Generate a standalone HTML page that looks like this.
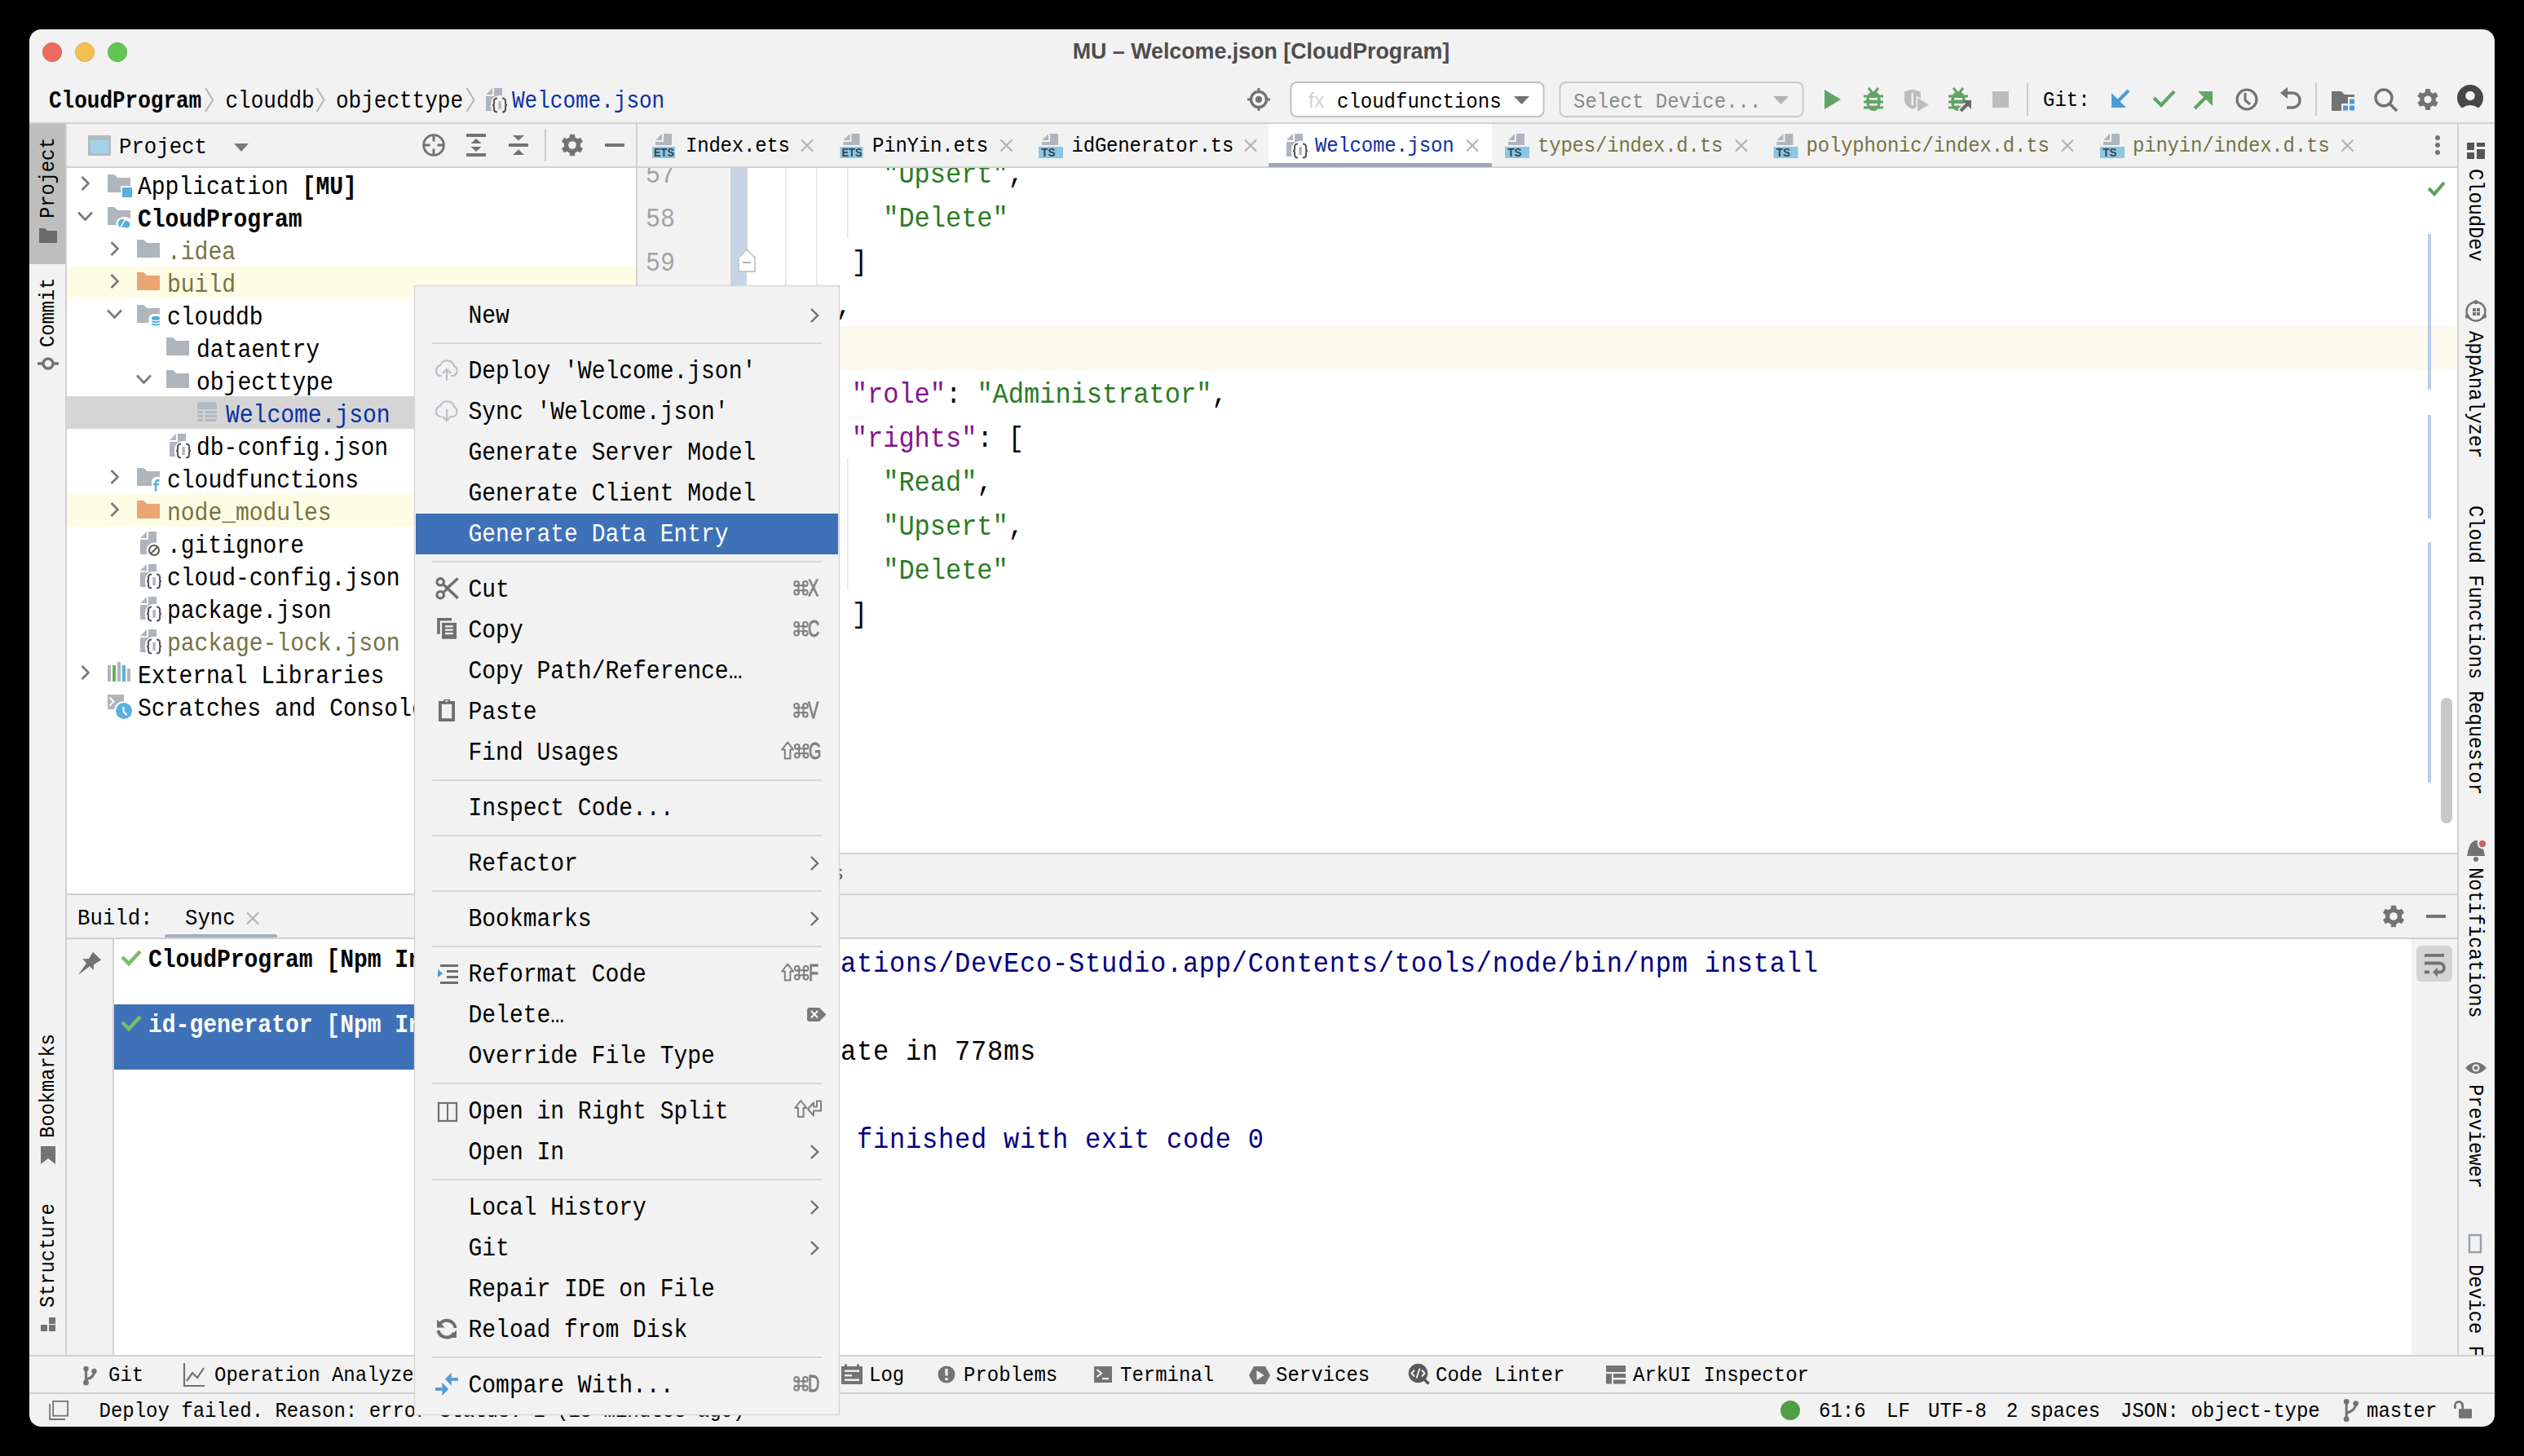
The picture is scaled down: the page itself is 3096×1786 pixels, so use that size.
<!DOCTYPE html>
<html><head><meta charset="utf-8"><title>MU - Welcome.json [CloudProgram]</title>
<style>html,body{margin:0;padding:0;background:#000;width:3096px;height:1786px;overflow:hidden}
</style></head>
<body><svg width="3096" height="1786" viewBox="0 0 3096 1786" xml:space="preserve" style="display:block"><rect x="0" y="0" width="3096" height="1786" fill="#000" />
<defs><clipPath id="win"><rect x="36" y="36" width="3024" height="1714" rx="14.5"/></clipPath><clipPath id="tree"><rect x="82" y="206" width="698" height="890"/></clipPath><clipPath id="ed"><rect x="782" y="206" width="2232" height="840"/></clipPath><clipPath id="rstrip"><rect x="3016" y="152" width="44" height="1510"/></clipPath><clipPath id="btree"><rect x="140" y="1152" width="700" height="510"/></clipPath></defs>
<g clip-path="url(#win)">
<rect x="36" y="36" width="3024" height="1714" fill="#f2f2f2" />
<circle cx="64" cy="64" r="11.6" fill="#ee6a5e" stroke="#d35b50" stroke-width="0.8"/>
<circle cx="104" cy="64" r="11.6" fill="#f5bf4f" stroke="#d9a343" stroke-width="0.8"/>
<circle cx="144" cy="64" r="11.6" fill="#61c554" stroke="#51a743" stroke-width="0.8"/>
<text x="1547" y="72.3" font-size="26.8" fill="#4d4d4d" font-family="'Liberation Sans', sans-serif" font-weight="bold" text-anchor="middle" >MU – Welcome.json [CloudProgram]</text>
<text transform="translate(60,132.4) scale(1,1.1)" font-size="26" fill="#000" font-family="'Liberation Mono', monospace" font-weight="bold" >CloudProgram</text>
<path d="M252 108 L261 122.5 L252 137" fill="none" stroke="#b5b5b5" stroke-width="2" />
<path d="M388.5 108 L397.5 122.5 L388.5 137" fill="none" stroke="#b5b5b5" stroke-width="2" />
<path d="M572.5 108 L581.5 122.5 L572.5 137" fill="none" stroke="#b5b5b5" stroke-width="2" />
<text transform="translate(276.5,132.4) scale(1,1.1)" font-size="26" fill="#000" font-family="'Liberation Mono', monospace" >clouddb</text>
<text transform="translate(412,132.4) scale(1,1.1)" font-size="26" fill="#000" font-family="'Liberation Mono', monospace" >objecttype</text>
<path d="M596 116 L604 108 V116 Z" fill="#afb5bd" />
<path d="M606 108 H616 V136 H596 V118 H606 Z" fill="#afb5bd" />
<rect x="602" y="117" width="24" height="24" rx="10" fill="#f2f2f2"/>
<rect x="611.4" y="124" width="3.4" height="10" fill="#afb5bd" />
<path d="M610 120.5 Q606 120.5 606 124 V127 Q606 129 604 129 Q606 129 606 131 V134 Q606 137.5 610 137.5 M616 120.5 Q620 120.5 620 124 V127 Q620 129 622 129 Q620 129 620 131 V134 Q620 137.5 616 137.5" fill="none" stroke="#555555" stroke-width="2.1" />
<text transform="translate(628,132.4) scale(1,1.1)" font-size="26" fill="#0a31a6" font-family="'Liberation Mono', monospace" >Welcome.json</text>
<g stroke="#737373" stroke-width="3.4" fill="none"><circle cx="1544" cy="122" r="9.5"/></g>
<circle cx="1544" cy="122" r="4.2" fill="#737373"/>
<path d="M1544 108 V112 M1544 132 V136 M1530 122 H1534 M1554 122 H1558" fill="none" stroke="#737373" stroke-width="3" />
<rect x="1583.5" y="101" width="310" height="42" fill="#ffffff" rx="7" stroke="#c2c2c2" stroke-width="2"/>
<text x="1605" y="131.5" font-size="25" fill="#d4d4d4" font-family="'Liberation Sans', sans-serif" >fx</text>
<text transform="translate(1640,132) scale(1,1.1)" font-size="24" fill="#000" font-family="'Liberation Mono', monospace" >cloudfunctions</text>
<path d="M1857 118 H1876 L1866.5 128 Z" fill="#737373" />
<rect x="1913.5" y="101" width="298" height="42" fill="none" rx="7" stroke="#c9c9c9" stroke-width="2"/>
<text transform="translate(1930,132) scale(1,1.1)" font-size="24" fill="#8a8a8a" font-family="'Liberation Mono', monospace" >Select Device...</text>
<path d="M2175 118 H2194 L2184.5 128 Z" fill="#b3b3b3" />
<path d="M2238 110 L2258 122 L2238 134 Z" fill="#62a465" />
<path d="M2286 118 H2310 M2286 125 H2310 M2286 132 H2310" fill="none" stroke="#62a465" stroke-width="3.2" />
<path d="M2292 108 L2296 113 M2304 108 L2300 113" fill="none" stroke="#62a465" stroke-width="3" />
<ellipse cx="2298" cy="124" rx="9" ry="12" fill="#62a465"/>
<rect x="2293" y="120" width="10" height="2.6" fill="#f2f2f2" />
<rect x="2293" y="127" width="10" height="2.6" fill="#f2f2f2" />
<path d="M2336 112.5 L2346 109.5 L2356 112.5 V122 Q2356 130 2346 134 Q2336 130 2336 122 Z" fill="#bcbcbc" />
<rect x="2344.5" y="114" width="2.5" height="15" fill="#f2f2f2" />
<path d="M2352 120 L2366 128.5 L2352 137 Z" fill="#bcbcbc" stroke="#f2f2f2" stroke-width="3" />
<path d="M2352 120 L2366 128.5 L2352 137 Z" fill="#bcbcbc" />
<path d="M2390 118 H2414 M2390 125 H2414 M2390 132 H2414" fill="none" stroke="#62a465" stroke-width="3.2" />
<path d="M2396 108 L2400 113 M2408 108 L2404 113" fill="none" stroke="#62a465" stroke-width="3" />
<ellipse cx="2402" cy="124" rx="9" ry="12" fill="#62a465"/>
<rect x="2397" y="120" width="10" height="2.6" fill="#f2f2f2" />
<rect x="2397" y="127" width="10" height="2.6" fill="#f2f2f2" />
<path d="M2404 137 L2417 124" fill="none" stroke="#f2f2f2" stroke-width="8" />
<path d="M2405 136 L2413 128" fill="none" stroke="#6a6a6a" stroke-width="4" />
<path d="M2407 123 H2418 V134 Z" fill="#6a6a6a" />
<rect x="2444" y="112" width="20" height="20" fill="#bdbdbd" />
<rect x="2486" y="102" width="2" height="40" fill="#cbcbcb" />
<text transform="translate(2506,130) scale(1,1.1)" font-size="24" fill="#000" font-family="'Liberation Mono', monospace" >Git:</text>
<path d="M2611 111 L2595 127" fill="none" stroke="#4d9ad8" stroke-width="4" />
<path d="M2590 114 V132 H2608 Z" fill="#4d9ad8" />
<path d="M2642 120 L2651 129 L2667 112" fill="none" stroke="#62a465" stroke-width="4.2" />
<path d="M2692 133 L2708 117" fill="none" stroke="#62a465" stroke-width="4" />
<path d="M2714 112 V130 L2696 112 Z" fill="#62a465" />
<circle cx="2756" cy="122" r="12" fill="none" stroke="#737373" stroke-width="3.2"/>
<path d="M2754 114 V123 L2760 128" fill="none" stroke="#737373" stroke-width="3" />
<path d="M2806 114 H2812 A9 9 0 0 1 2812 132 H2805" fill="none" stroke="#737373" stroke-width="3.4" />
<path d="M2797 114 L2806 107 V121 Z" fill="#737373" />
<rect x="2840" y="102" width="2" height="40" fill="#cbcbcb" />
<path d="M2860 112 H2872 L2876 116 H2888 V119 H2880 V127 H2872 V136 H2860 Z" fill="#737373" />
<rect x="2882" y="121.5" width="6" height="6" fill="#4d9ad8" />
<rect x="2874" y="129.5" width="6" height="6" fill="#4d9ad8" />
<rect x="2882" y="129.5" width="6" height="6" fill="#4d9ad8" />
<circle cx="2924" cy="120" r="10" fill="none" stroke="#737373" stroke-width="3.4"/>
<path d="M2931 127 L2940 136" fill="none" stroke="#737373" stroke-width="3.6" />
<path d="M2975.27 113.16 L2975.64 109.72 L2980.36 109.72 L2980.73 113.16 L2984.29 115.21 L2987.45 113.82 L2989.81 117.91 L2987.02 119.95 L2987.02 124.05 L2989.81 126.09 L2987.45 130.18 L2984.29 128.79 L2980.73 130.84 L2980.36 134.28 L2975.64 134.28 L2975.27 130.84 L2971.71 128.79 L2968.55 130.18 L2966.19 126.09 L2968.98 124.05 L2968.98 119.95 L2966.19 117.91 L2968.55 113.82 L2971.71 115.21 Z" fill="#737373" stroke="#737373" stroke-width="1.2" stroke-linejoin="round"/>
<circle cx="2978" cy="122" r="4.62" fill="#f2f2f2"/>
<circle cx="3030" cy="120" r="16" fill="#474747"/>
<circle cx="3030" cy="117.5" r="5.8" fill="#f2f2f2"/>
<ellipse cx="3030" cy="139" rx="13" ry="10" fill="#f2f2f2"/>
<rect x="36" y="150" width="3024" height="2" fill="#d1d1d1" />
<rect x="36" y="152" width="44" height="172" fill="#bebebe" />
<rect x="80" y="152" width="2" height="1510" fill="#d1d1d1" />
<text transform="translate(66,268) rotate(-90) scale(1,1.1)" font-size="24" fill="#000" font-family="'Liberation Mono', monospace" letter-spacing="-0.2">Project</text>
<path d="M48 280 H55 L58 283 H70 V298 H48 Z" fill="#6b6b6b" />
<text transform="translate(66,426) rotate(-90) scale(1,1.1)" font-size="24" fill="#000" font-family="'Liberation Mono', monospace" letter-spacing="-0.2">Commit</text>
<circle cx="59" cy="446" r="6" fill="none" stroke="#737373" stroke-width="3.4"/>
<path d="M46 446 H53 M65 446 H72" fill="none" stroke="#737373" stroke-width="3.4" />
<text transform="translate(66,1396) rotate(-90) scale(1,1.1)" font-size="24" fill="#000" font-family="'Liberation Mono', monospace" letter-spacing="-0.2">Bookmarks</text>
<path d="M50 1406 H68 V1428 L59 1421 L50 1428 Z" fill="#737373" />
<text transform="translate(66,1604) rotate(-90) scale(1,1.1)" font-size="24" fill="#000" font-family="'Liberation Mono', monospace" letter-spacing="-0.2">Structure</text>
<rect x="50" y="1625" width="8" height="8" fill="#737373" />
<rect x="60" y="1625" width="8" height="8" fill="#737373" />
<rect x="60" y="1616" width="8" height="8" fill="#737373" />
<rect x="108" y="166" width="28" height="25" fill="#b3bac2" />
<rect x="111" y="172" width="22" height="16" fill="#a3d3ea" />
<text transform="translate(146,187.5) scale(1,1.1)" font-size="25.7" fill="#000" font-family="'Liberation Mono', monospace" >Project</text>
<path d="M287 176 H305 L296 186 Z" fill="#7a7a7a" />
<circle cx="532" cy="178" r="12.4" fill="none" stroke="#737373" stroke-width="2.9"/>
<path d="M532 166 V173.5 M532 182.5 V190 M520 178 H527.5 M536.5 178 H544" fill="none" stroke="#737373" stroke-width="3" />
<rect x="572" y="164" width="24" height="4" fill="#737373" />
<rect x="572" y="188" width="24" height="4" fill="#737373" />
<path d="M577.5 176 L584 170 L590.5 176 Z M577.5 180 L584 186 L590.5 180 Z" fill="#737373" />
<rect x="624" y="176" width="24" height="4" fill="#737373" />
<path d="M629 166 H643 L636 172.6 Z M629 190 H643 L636 183.2 Z" fill="#737373" />
<rect x="668" y="158" width="2" height="40" fill="#cbcbcb" />
<path d="M699.16 168.81 L699.54 165.23 L704.46 165.23 L704.84 168.81 L708.54 170.94 L711.83 169.49 L714.28 173.74 L711.38 175.87 L711.38 180.13 L714.28 182.26 L711.83 186.51 L708.54 185.06 L704.84 187.19 L704.46 190.77 L699.54 190.77 L699.16 187.19 L695.46 185.06 L692.17 186.51 L689.72 182.26 L692.62 180.13 L692.62 175.87 L689.72 173.74 L692.17 169.49 L695.46 170.94 Z" fill="#737373" stroke="#737373" stroke-width="1.2" stroke-linejoin="round"/>
<circle cx="702" cy="178" r="4.81" fill="#f2f2f2"/>
<rect x="742" y="176" width="24" height="4" fill="#737373" />
<rect x="82" y="204" width="2932" height="2" fill="#d1d1d1" />
<rect x="780" y="152" width="2" height="944" fill="#d1d1d1" />
<rect x="82" y="206" width="698" height="890" fill="#ffffff" />
<g clip-path="url(#tree)">
<path d="M100.5 217 L108.5 225 L100.5 233" fill="none" stroke="#7a7a7a" stroke-width="2.6" stroke-linecap="butt"/>
<path d="M132 214 H140 L144.5 218 H160 V236 H132 Z" fill="#afb5bd" />
<rect x="148" y="228" width="14" height="14" fill="#ffffff" />
<rect x="150" y="230" width="12" height="12" fill="#5aafdd" />
<text transform="translate(169,237.5) scale(1,1.1)" font-size="28" fill="#000" font-family="'Liberation Mono', monospace" >Application </text>
<text transform="translate(370.6,237.5) scale(1,1.1)" font-size="28" fill="#000" font-family="'Liberation Mono', monospace" font-weight="bold" >[MU]</text>
<path d="M96.0 260.5 L104.5 269.5 L113.0 260.5" fill="none" stroke="#7a7a7a" stroke-width="2.6" />
<path d="M132 254 H140 L144.5 258 H160 V276 H132 Z" fill="#afb5bd" />
<ellipse cx="152.5" cy="274" rx="10" ry="8" fill="#ffffff"/>
<circle cx="150" cy="273.8" r="5" fill="#5aafdd"/>
<circle cx="155.3" cy="275.3" r="4.2" fill="#5aafdd"/>
<rect x="145.5" y="274" width="13" height="4.6" fill="#5aafdd" rx="2.2" />
<path d="M147.5 279.5 L153.5 269" fill="none" stroke="#ffffff" stroke-width="1.5" />
<text transform="translate(169,277.5) scale(1,1.1)" font-size="28" fill="#000" font-family="'Liberation Mono', monospace" font-weight="bold" >CloudProgram</text>
<path d="M136.5 297 L144.5 305 L136.5 313" fill="none" stroke="#7a7a7a" stroke-width="2.6" stroke-linecap="butt"/>
<path d="M168 294 H176 L180.5 298 H196 V316 H168 Z" fill="#afb5bd" />
<text transform="translate(205,317.5) scale(1,1.1)" font-size="28" fill="#767444" font-family="'Liberation Mono', monospace" >.idea</text>
<rect x="82" y="326" width="698" height="40" fill="#fdfde6" />
<path d="M136.5 337 L144.5 345 L136.5 353" fill="none" stroke="#7a7a7a" stroke-width="2.6" stroke-linecap="butt"/>
<path d="M168 334 H176 L180.5 338 H196 V356 H168 Z" fill="#eba573" />
<text transform="translate(205,357.5) scale(1,1.1)" font-size="28" fill="#767444" font-family="'Liberation Mono', monospace" >build</text>
<path d="M132.0 380.5 L140.5 389.5 L149.0 380.5" fill="none" stroke="#7a7a7a" stroke-width="2.6" />
<path d="M168 374 H176 L180.5 378 H196 V396 H168 Z" fill="#afb5bd" />
<rect x="182.5" y="385" width="17" height="19" rx="6" fill="#ffffff"/>
<path d="M186 389.8 V398 A5 2.2 0 0 0 196 398 V389.8 Z" fill="#4eaede" />
<ellipse cx="191" cy="389.8" rx="5" ry="2" fill="#4eaede"/>
<path d="M186 391.6 A5 2 0 0 0 196 391.6" fill="none" stroke="#ffffff" stroke-width="1.2" />
<path d="M186 394.8 A5 2 0 0 0 196 394.8" fill="none" stroke="#ffffff" stroke-width="1.2" />
<path d="M186 398.0 A5 2 0 0 0 196 398.0" fill="none" stroke="#ffffff" stroke-width="1.2" />
<text transform="translate(205,397.5) scale(1,1.1)" font-size="28" fill="#000" font-family="'Liberation Mono', monospace" >clouddb</text>
<path d="M204 414 H212 L216.5 418 H232 V436 H204 Z" fill="#afb5bd" />
<text transform="translate(241,437.5) scale(1,1.1)" font-size="28" fill="#000" font-family="'Liberation Mono', monospace" >dataentry</text>
<path d="M168.0 460.5 L176.5 469.5 L185.0 460.5" fill="none" stroke="#7a7a7a" stroke-width="2.6" />
<path d="M204 454 H212 L216.5 458 H232 V476 H204 Z" fill="#afb5bd" />
<text transform="translate(241,477.5) scale(1,1.1)" font-size="28" fill="#000" font-family="'Liberation Mono', monospace" >objecttype</text>
<rect x="82" y="486" width="698" height="40" fill="#d5d5d5" />
<rect x="242" y="493" width="24" height="24" fill="#b1b9c1" rx="4" />
<rect x="242" y="502" width="24" height="1.8" fill="#d5d5d5" />
<rect x="242" y="507" width="24" height="1.8" fill="#d5d5d5" />
<rect x="242" y="512" width="24" height="1.8" fill="#d5d5d5" />
<rect x="249" y="502" width="2.2" height="17" fill="#d5d5d5" />
<text transform="translate(277,517.5) scale(1,1.1)" font-size="28" fill="#0a31a6" font-family="'Liberation Mono', monospace" >Welcome.json</text>
<path d="M208 540 L216 532 V540 Z" fill="#afb5bd" />
<path d="M218 532 H228 V560 H208 V542 H218 Z" fill="#afb5bd" />
<rect x="214" y="541" width="24" height="24" rx="10" fill="#ffffff"/>
<rect x="223.4" y="548" width="3.4" height="10" fill="#afb5bd" />
<path d="M222 544.5 Q218 544.5 218 548 V551 Q218 553 216 553 Q218 553 218 555 V558 Q218 561.5 222 561.5 M228 544.5 Q232 544.5 232 548 V551 Q232 553 234 553 Q232 553 232 555 V558 Q232 561.5 228 561.5" fill="none" stroke="#555555" stroke-width="2.1" />
<text transform="translate(241,557.5) scale(1,1.1)" font-size="28" fill="#000" font-family="'Liberation Mono', monospace" >db-config.json</text>
<path d="M136.5 577 L144.5 585 L136.5 593" fill="none" stroke="#7a7a7a" stroke-width="2.6" stroke-linecap="butt"/>
<path d="M168 574 H176 L180.5 578 H196 V596 H168 Z" fill="#afb5bd" />
<rect x="186" y="585" width="14" height="20" rx="6" fill="#ffffff"/>
<path d="M195.5 589.5 Q191 588 191 593 V602.5 M188 594 H195" fill="none" stroke="#5aafdd" stroke-width="2.6" />
<text transform="translate(205,597.5) scale(1,1.1)" font-size="28" fill="#000" font-family="'Liberation Mono', monospace" >cloudfunctions</text>
<rect x="82" y="606" width="698" height="40" fill="#fdfde6" />
<path d="M136.5 617 L144.5 625 L136.5 633" fill="none" stroke="#7a7a7a" stroke-width="2.6" stroke-linecap="butt"/>
<path d="M168 614 H176 L180.5 618 H196 V636 H168 Z" fill="#eba573" />
<text transform="translate(205,637.5) scale(1,1.1)" font-size="28" fill="#767444" font-family="'Liberation Mono', monospace" >node_modules</text>
<path d="M172 660 L180 652 V660 Z" fill="#afb5bd" />
<path d="M182 652 H192 V680 H172 V662 H182 Z" fill="#afb5bd" />
<circle cx="189" cy="675" r="9.5" fill="#ffffff"/>
<circle cx="189" cy="675" r="6" fill="none" stroke="#5e5e5e" stroke-width="2.2"/>
<path d="M184.5 679.5 L193.5 670.5" fill="none" stroke="#5e5e5e" stroke-width="2.2" />
<text transform="translate(205,677.5) scale(1,1.1)" font-size="28" fill="#000" font-family="'Liberation Mono', monospace" >.gitignore</text>
<path d="M172 700 L180 692 V700 Z" fill="#afb5bd" />
<path d="M182 692 H192 V720 H172 V702 H182 Z" fill="#afb5bd" />
<rect x="178" y="701" width="24" height="24" rx="10" fill="#ffffff"/>
<rect x="187.4" y="708" width="3.4" height="10" fill="#afb5bd" />
<path d="M186 704.5 Q182 704.5 182 708 V711 Q182 713 180 713 Q182 713 182 715 V718 Q182 721.5 186 721.5 M192 704.5 Q196 704.5 196 708 V711 Q196 713 198 713 Q196 713 196 715 V718 Q196 721.5 192 721.5" fill="none" stroke="#555555" stroke-width="2.1" />
<text transform="translate(205,717.5) scale(1,1.1)" font-size="28" fill="#000" font-family="'Liberation Mono', monospace" >cloud-config.json</text>
<path d="M172 740 L180 732 V740 Z" fill="#afb5bd" />
<path d="M182 732 H192 V760 H172 V742 H182 Z" fill="#afb5bd" />
<rect x="178" y="741" width="24" height="24" rx="10" fill="#ffffff"/>
<rect x="187.4" y="748" width="3.4" height="10" fill="#afb5bd" />
<path d="M186 744.5 Q182 744.5 182 748 V751 Q182 753 180 753 Q182 753 182 755 V758 Q182 761.5 186 761.5 M192 744.5 Q196 744.5 196 748 V751 Q196 753 198 753 Q196 753 196 755 V758 Q196 761.5 192 761.5" fill="none" stroke="#555555" stroke-width="2.1" />
<text transform="translate(205,757.5) scale(1,1.1)" font-size="28" fill="#000" font-family="'Liberation Mono', monospace" >package.json</text>
<path d="M172 780 L180 772 V780 Z" fill="#afb5bd" />
<path d="M182 772 H192 V800 H172 V782 H182 Z" fill="#afb5bd" />
<rect x="178" y="781" width="24" height="24" rx="10" fill="#ffffff"/>
<rect x="187.4" y="788" width="3.4" height="10" fill="#afb5bd" />
<path d="M186 784.5 Q182 784.5 182 788 V791 Q182 793 180 793 Q182 793 182 795 V798 Q182 801.5 186 801.5 M192 784.5 Q196 784.5 196 788 V791 Q196 793 198 793 Q196 793 196 795 V798 Q196 801.5 192 801.5" fill="none" stroke="#555555" stroke-width="2.1" />
<text transform="translate(205,797.5) scale(1,1.1)" font-size="28" fill="#767444" font-family="'Liberation Mono', monospace" >package-lock.json</text>
<path d="M100.5 817 L108.5 825 L100.5 833" fill="none" stroke="#7a7a7a" stroke-width="2.6" stroke-linecap="butt"/>
<rect x="132" y="816" width="4" height="20" fill="#afb5bd" />
<rect x="138" y="816" width="4" height="20" fill="#6db05a" />
<rect x="144" y="812" width="4" height="24" fill="#afb5bd" />
<rect x="150" y="816" width="4" height="20" fill="#5aafdd" />
<rect x="156" y="820" width="4" height="16" fill="#afb5bd" />
<text transform="translate(169,837.5) scale(1,1.1)" font-size="28" fill="#000" font-family="'Liberation Mono', monospace" >External Libraries</text>
<rect x="132" y="852" width="20" height="18" fill="#afb5bd" />
<path d="M134.5 855.5 L139.5 860.5 L134.5 865.5" fill="none" stroke="#ffffff" stroke-width="2" />
<circle cx="152" cy="872" r="12" fill="#ffffff"/>
<circle cx="152" cy="872" r="10" fill="#5aafdd"/>
<path d="M151.5 867 V873 L155.5 877" fill="none" stroke="#ffffff" stroke-width="2" />
<text transform="translate(169,877.5) scale(1,1.1)" font-size="28" fill="#000" font-family="'Liberation Mono', monospace" >Scratches and Consoles</text>
</g>
<rect x="1556" y="152" width="274" height="52" fill="#ffffff" />
<rect x="1556" y="200" width="274" height="5" fill="#a1a9b8" />
<path d="M804 172 L812 164 V172 Z" fill="#afb5bd" />
<path d="M814 164 H824 V178 H804 V174 H814 Z" fill="#afb5bd" />
<rect x="800" y="180" width="28" height="14" fill="#8bc7e5" />
<text transform="translate(814.5,192) scale(0.9,1)" font-size="14.2" font-weight="bold" fill="#36444e" font-family="'Liberation Sans', sans-serif" text-anchor="middle">ETS</text>
<text transform="translate(841,186) scale(1,1.1)" font-size="24" fill="#000" font-family="'Liberation Mono', monospace" letter-spacing="-0.2" >Index.ets</text>
<path d="M983 171.5 L997 185.5 M997 171.5 L983 185.5" fill="none" stroke="#b4b4b4" stroke-width="2.2" />
<path d="M1034.5 172 L1042.5 164 V172 Z" fill="#afb5bd" />
<path d="M1044.5 164 H1054.5 V178 H1034.5 V174 H1044.5 Z" fill="#afb5bd" />
<rect x="1030.5" y="180" width="28" height="14" fill="#8bc7e5" />
<text transform="translate(1045.0,192) scale(0.9,1)" font-size="14.2" font-weight="bold" fill="#36444e" font-family="'Liberation Sans', sans-serif" text-anchor="middle">ETS</text>
<text transform="translate(1070,186) scale(1,1.1)" font-size="24" fill="#000" font-family="'Liberation Mono', monospace" letter-spacing="-0.2" >PinYin.ets</text>
<path d="M1227.5 171.5 L1241.5 185.5 M1241.5 171.5 L1227.5 185.5" fill="none" stroke="#b4b4b4" stroke-width="2.2" />
<path d="M1278 172 L1286 164 V172 Z" fill="#afb5bd" />
<path d="M1288 164 H1298 V178 H1278 V174 H1288 Z" fill="#afb5bd" />
<rect x="1274" y="180" width="30" height="14" fill="#8bc7e5" />
<text transform="translate(1277.2,192) scale(0.95,1)" font-size="14.2" font-weight="bold" fill="#36444e" font-family="'Liberation Sans', sans-serif">TS</text>
<text transform="translate(1314.5,186) scale(1,1.1)" font-size="24" fill="#000" font-family="'Liberation Mono', monospace" letter-spacing="-0.2" >idGenerator.ts</text>
<path d="M1527 171.5 L1541 185.5 M1541 171.5 L1527 185.5" fill="none" stroke="#b4b4b4" stroke-width="2.2" />
<path d="M1578 172 L1586 164 V172 Z" fill="#afb5bd" />
<path d="M1588 164 H1598 V192 H1578 V174 H1588 Z" fill="#afb5bd" />
<rect x="1584" y="173" width="24" height="24" rx="10" fill="#ffffff"/>
<rect x="1593.4" y="180" width="3.4" height="10" fill="#afb5bd" />
<path d="M1592 176.5 Q1588 176.5 1588 180 V183 Q1588 185 1586 185 Q1588 185 1588 187 V190 Q1588 193.5 1592 193.5 M1598 176.5 Q1602 176.5 1602 180 V183 Q1602 185 1604 185 Q1602 185 1602 187 V190 Q1602 193.5 1598 193.5" fill="none" stroke="#555555" stroke-width="2.1" />
<text transform="translate(1613,186) scale(1,1.1)" font-size="24" fill="#0a31a6" font-family="'Liberation Mono', monospace" letter-spacing="-0.2" >Welcome.json</text>
<path d="M1799 171.5 L1813 185.5 M1813 171.5 L1799 185.5" fill="none" stroke="#b4b4b4" stroke-width="2.2" />
<path d="M1850 172 L1858 164 V172 Z" fill="#afb5bd" />
<path d="M1860 164 H1870 V178 H1850 V174 H1860 Z" fill="#afb5bd" />
<rect x="1846" y="180" width="30" height="14" fill="#8bc7e5" />
<text transform="translate(1849.2,192) scale(0.95,1)" font-size="14.2" font-weight="bold" fill="#36444e" font-family="'Liberation Sans', sans-serif">TS</text>
<text transform="translate(1886,186) scale(1,1.1)" font-size="24" fill="#767444" font-family="'Liberation Mono', monospace" letter-spacing="-0.2" >types/index.d.ts</text>
<path d="M2129 171.5 L2143 185.5 M2143 171.5 L2129 185.5" fill="none" stroke="#b4b4b4" stroke-width="2.2" />
<path d="M2179.5 172 L2187.5 164 V172 Z" fill="#afb5bd" />
<path d="M2189.5 164 H2199.5 V178 H2179.5 V174 H2189.5 Z" fill="#afb5bd" />
<rect x="2175.5" y="180" width="30" height="14" fill="#8bc7e5" />
<text transform="translate(2178.7,192) scale(0.95,1)" font-size="14.2" font-weight="bold" fill="#36444e" font-family="'Liberation Sans', sans-serif">TS</text>
<text transform="translate(2215.5,186) scale(1,1.1)" font-size="24" fill="#767444" font-family="'Liberation Mono', monospace" letter-spacing="-0.2" >polyphonic/index.d.ts</text>
<path d="M2529 171.5 L2543 185.5 M2543 171.5 L2529 185.5" fill="none" stroke="#b4b4b4" stroke-width="2.2" />
<path d="M2580 172 L2588 164 V172 Z" fill="#afb5bd" />
<path d="M2590 164 H2600 V178 H2580 V174 H2590 Z" fill="#afb5bd" />
<rect x="2576" y="180" width="30" height="14" fill="#8bc7e5" />
<text transform="translate(2579.2,192) scale(0.95,1)" font-size="14.2" font-weight="bold" fill="#36444e" font-family="'Liberation Sans', sans-serif">TS</text>
<text transform="translate(2616,186) scale(1,1.1)" font-size="24" fill="#767444" font-family="'Liberation Mono', monospace" letter-spacing="-0.2" >pinyin/index.d.ts</text>
<path d="M2872.5 171.5 L2886.5 185.5 M2886.5 171.5 L2872.5 185.5" fill="none" stroke="#b4b4b4" stroke-width="2.2" />
<circle cx="2990" cy="169" r="3" fill="#737373"/>
<circle cx="2990" cy="178" r="3" fill="#737373"/>
<circle cx="2990" cy="187" r="3" fill="#737373"/>
<rect x="916" y="206" width="2098" height="840" fill="#ffffff" />
<rect x="896" y="206" width="20" height="560" fill="#c7d4e8" />
<rect x="916" y="400" width="2098" height="54" fill="#fcfaed" />
<g clip-path="url(#ed)">
<rect x="963" y="206" width="1.6" height="840" fill="#e6e6e6" />
<rect x="1001" y="206" width="1.6" height="840" fill="#e6e6e6" />
<rect x="1039" y="206" width="1.6" height="86" fill="#e6e6e6" />
<rect x="1039" y="562" width="1.6" height="162" fill="#e6e6e6" />
<text transform="translate(828,224) scale(1,1.1)" font-size="30" fill="#a3a3a3" font-family="'Liberation Mono', monospace" text-anchor="end" >57</text>
<text transform="translate(828,278) scale(1,1.1)" font-size="30" fill="#a3a3a3" font-family="'Liberation Mono', monospace" text-anchor="end" >58</text>
<text transform="translate(828,332) scale(1,1.1)" font-size="30" fill="#a3a3a3" font-family="'Liberation Mono', monospace" text-anchor="end" >59</text>
<text transform="translate(828,386) scale(1,1.1)" font-size="30" fill="#a3a3a3" font-family="'Liberation Mono', monospace" text-anchor="end" >60</text>
<text transform="translate(828,440) scale(1,1.1)" font-size="30" fill="#a3a3a3" font-family="'Liberation Mono', monospace" text-anchor="end" >61</text>
<text transform="translate(828,494) scale(1,1.1)" font-size="30" fill="#a3a3a3" font-family="'Liberation Mono', monospace" text-anchor="end" >62</text>
<text transform="translate(828,548) scale(1,1.1)" font-size="30" fill="#a3a3a3" font-family="'Liberation Mono', monospace" text-anchor="end" >63</text>
<text transform="translate(828,602) scale(1,1.1)" font-size="30" fill="#a3a3a3" font-family="'Liberation Mono', monospace" text-anchor="end" >64</text>
<text transform="translate(828,656) scale(1,1.1)" font-size="30" fill="#a3a3a3" font-family="'Liberation Mono', monospace" text-anchor="end" >65</text>
<text transform="translate(828,710) scale(1,1.1)" font-size="30" fill="#a3a3a3" font-family="'Liberation Mono', monospace" text-anchor="end" >66</text>
<text transform="translate(828,764) scale(1,1.1)" font-size="30" fill="#a3a3a3" font-family="'Liberation Mono', monospace" text-anchor="end" >67</text>
<text transform="translate(828,818) scale(1,1.1)" font-size="30" fill="#a3a3a3" font-family="'Liberation Mono', monospace" text-anchor="end" >68</text>
<text transform="translate(828,872) scale(1,1.1)" font-size="30" fill="#a3a3a3" font-family="'Liberation Mono', monospace" text-anchor="end" >69</text>
<rect x="915" y="206" width="1.8" height="102" fill="#cfcfcf" />
<path d="M906 333 V316 L916 306 L926 316 V333 Z" fill="#ffffff" stroke="#c9c9c9" stroke-width="1.8" />
<rect x="911" y="321" width="10" height="2" fill="#b0b0b0" />
<text transform="translate(1083.2,224) scale(1,1.1)" font-size="32" fill="#2c7b25" font-family="'Liberation Mono', monospace" >"Upsert"</text>
<text transform="translate(1236.8,224) scale(1,1.1)" font-size="32" fill="#000" font-family="'Liberation Mono', monospace" >,</text>
<text transform="translate(1083.2,278) scale(1,1.1)" font-size="32" fill="#2c7b25" font-family="'Liberation Mono', monospace" >"Delete"</text>
<text transform="translate(1044.8,332) scale(1,1.1)" font-size="32" fill="#000" font-family="'Liberation Mono', monospace" >]</text>
<text transform="translate(1006.4,386) scale(1,1.1)" font-size="32" fill="#000" font-family="'Liberation Mono', monospace" >},</text>
<text transform="translate(1006.4,440) scale(1,1.1)" font-size="32" fill="#000" font-family="'Liberation Mono', monospace" >{</text>
<text transform="translate(1044.8,494) scale(1,1.1)" font-size="32" fill="#851490" font-family="'Liberation Mono', monospace" >"role"</text>
<text transform="translate(1160.0,494) scale(1,1.1)" font-size="32" fill="#000" font-family="'Liberation Mono', monospace" >: </text>
<text transform="translate(1198.4,494) scale(1,1.1)" font-size="32" fill="#2c7b25" font-family="'Liberation Mono', monospace" >"Administrator"</text>
<text transform="translate(1486.4,494) scale(1,1.1)" font-size="32" fill="#000" font-family="'Liberation Mono', monospace" >,</text>
<text transform="translate(1044.8,548) scale(1,1.1)" font-size="32" fill="#851490" font-family="'Liberation Mono', monospace" >"rights"</text>
<text transform="translate(1198.4,548) scale(1,1.1)" font-size="32" fill="#000" font-family="'Liberation Mono', monospace" >: [</text>
<text transform="translate(1083.2,602) scale(1,1.1)" font-size="32" fill="#2c7b25" font-family="'Liberation Mono', monospace" >"Read"</text>
<text transform="translate(1198.4,602) scale(1,1.1)" font-size="32" fill="#000" font-family="'Liberation Mono', monospace" >,</text>
<text transform="translate(1083.2,656) scale(1,1.1)" font-size="32" fill="#2c7b25" font-family="'Liberation Mono', monospace" >"Upsert"</text>
<text transform="translate(1236.8,656) scale(1,1.1)" font-size="32" fill="#000" font-family="'Liberation Mono', monospace" >,</text>
<text transform="translate(1083.2,710) scale(1,1.1)" font-size="32" fill="#2c7b25" font-family="'Liberation Mono', monospace" >"Delete"</text>
<text transform="translate(1044.8,764) scale(1,1.1)" font-size="32" fill="#000" font-family="'Liberation Mono', monospace" >]</text>
<text transform="translate(1006.4,818) scale(1,1.1)" font-size="32" fill="#000" font-family="'Liberation Mono', monospace" >}</text>
<text transform="translate(968.0,872) scale(1,1.1)" font-size="32" fill="#000" font-family="'Liberation Mono', monospace" >]</text>
</g>
<path d="M2979 231 L2986 238 L2998 224" fill="none" stroke="#5aa05e" stroke-width="4" />
<rect x="2978" y="287" width="4" height="191" fill="#b9cdef" />
<rect x="2978" y="509" width="4" height="127" fill="#b9cdef" />
<rect x="2978" y="665" width="4" height="295" fill="#b9cdef" />
<rect x="2994" y="856" width="14" height="154" fill="#c8c8c8" rx="7" />
<rect x="782" y="1046" width="2232" height="2" fill="#d1d1d1" />
<text transform="translate(1035,1079) scale(1,1.1)" font-size="24" fill="#555" font-family="'Liberation Mono', monospace" text-anchor="end" >objecttypes</text>
<rect x="82" y="1096" width="2932" height="2" fill="#d1d1d1" />
<text transform="translate(95,1134) scale(1,1.1)" font-size="25.7" fill="#000" font-family="'Liberation Mono', monospace" >Build:</text>
<text transform="translate(227,1134) scale(1,1.1)" font-size="25.7" fill="#000" font-family="'Liberation Mono', monospace" >Sync</text>
<path d="M303 1119.5 L317 1133.5 M317 1119.5 L303 1133.5" fill="none" stroke="#b4b4b4" stroke-width="2.2" />
<rect x="202" y="1146" width="138" height="5" fill="#a4acbc" rx="2.5" />
<path d="M2933.16 1114.81 L2933.54 1111.23 L2938.46 1111.23 L2938.84 1114.81 L2942.54 1116.94 L2945.83 1115.49 L2948.28 1119.74 L2945.38 1121.87 L2945.38 1126.13 L2948.28 1128.26 L2945.83 1132.51 L2942.54 1131.06 L2938.84 1133.19 L2938.46 1136.77 L2933.54 1136.77 L2933.16 1133.19 L2929.46 1131.06 L2926.17 1132.51 L2923.72 1128.26 L2926.62 1126.13 L2926.62 1121.87 L2923.72 1119.74 L2926.17 1115.49 L2929.46 1116.94 Z" fill="#737373" stroke="#737373" stroke-width="1.2" stroke-linejoin="round"/>
<circle cx="2936" cy="1124" r="4.81" fill="#f2f2f2"/>
<rect x="2976" y="1122" width="24" height="4" fill="#737373" />
<rect x="82" y="1150" width="2932" height="2" fill="#d1d1d1" />
<rect x="138" y="1152" width="2" height="510" fill="#d1d1d1" />
<rect x="140" y="1152" width="2818" height="510" fill="#ffffff" />
<path d="M114 1167.7 L124.1 1177.5 L115 1183.2 L114.7 1189.9 L110.1 1185.2 L95.8 1195.9 L106 1181.4 L101.1 1176.3 L109 1176 Z" fill="#737373" />
<rect x="140" y="1232" width="720" height="80" fill="#3e71b7" />
<g clip-path="url(#btree)">
<path d="M150 1174 L158 1182 L172 1167" fill="none" stroke="#7dbb6a" stroke-width="4.5" />
<text transform="translate(182,1186) scale(1,1.1)" font-size="28" fill="#000" font-family="'Liberation Mono', monospace" font-weight="bold" >CloudProgram [Npm Install]</text>
<path d="M150 1254 L158 1262 L172 1247" fill="none" stroke="#7dbb6a" stroke-width="4.5" />
<text transform="translate(182,1266) scale(1,1.1)" font-size="28" fill="#fff" font-family="'Liberation Mono', monospace" font-weight="bold" >id-generator [Npm Install]</text>
</g>
<text transform="translate(891,1192) scale(1,1.1)" font-size="32" fill="#000080" font-family="'Liberation Mono', monospace" letter-spacing="0.8" >/Applications/DevEco-Studio.app/Contents/tools/node/bin/npm install</text>
<text transform="translate(891,1300) scale(1,1.1)" font-size="32" fill="#000" font-family="'Liberation Mono', monospace" letter-spacing="0.8" >up to date in 778ms</text>
<text transform="translate(891,1408) scale(1,1.1)" font-size="32" fill="#000080" font-family="'Liberation Mono', monospace" letter-spacing="0.8" >Process finished with exit code 0</text>
<rect x="2958" y="1152" width="56" height="510" fill="#f2f2f2" />
<rect x="2964" y="1160" width="44" height="44" fill="#d4d4d4" rx="6" />
<rect x="2974" y="1170" width="24" height="3.8" fill="#737373" />
<path d="M2974 1181.5 H2992.5 A5.5 5.5 0 0 1 2992.5 1192.5 H2988" fill="none" stroke="#737373" stroke-width="3.8" />
<path d="M2984 1192.5 L2990 1186.5 V1198.5 Z" fill="#737373" />
<rect x="2974" y="1190.5" width="6" height="3.8" fill="#737373" />
<rect x="3014" y="152" width="2" height="1510" fill="#d1d1d1" />
<rect x="3026" y="175" width="9" height="9" fill="#555" />
<rect x="3038" y="175" width="10" height="5" fill="#555" />
<rect x="3026" y="187" width="9" height="8" fill="#555" />
<rect x="3038" y="183" width="10" height="12" fill="#555" />
<text transform="translate(3029,207) rotate(90) scale(1,1.1)" font-size="24" fill="#000" font-family="'Liberation Mono', monospace" letter-spacing="-0.2">CloudDev</text>
<circle cx="3037" cy="382" r="11.5" fill="none" stroke="#737373" stroke-width="2.4"/>
<rect x="3033" y="378" width="4" height="4" fill="#737373" />
<rect x="3038" y="378" width="4" height="4" fill="#737373" />
<rect x="3033" y="383" width="4" height="4" fill="#737373" />
<rect x="3038" y="383" width="4" height="4" fill="#737373" />
<circle cx="3037" cy="370.5" r="2.6" fill="#737373"/>
<circle cx="3026.5" cy="388" r="2.6" fill="#737373"/>
<circle cx="3047.5" cy="388" r="2.6" fill="#737373"/>
<text transform="translate(3029,406) rotate(90) scale(1,1.1)" font-size="24" fill="#000" font-family="'Liberation Mono', monospace" letter-spacing="-0.2">AppAnalyzer</text>
<text transform="translate(3029,620) rotate(90) scale(1,1.1)" font-size="24" fill="#000" font-family="'Liberation Mono', monospace" letter-spacing="-0.2">Cloud Functions Requestor</text>
<path d="M3026 1050 Q3028 1040 3030 1036 Q3037 1026 3044 1036 Q3046 1040 3048 1050 Z" fill="#737373" />
<circle cx="3037" cy="1054" r="3" fill="#737373"/>
<circle cx="3045" cy="1035" r="5.2" fill="#cf6262" stroke="#f2f2f2" stroke-width="2"/>
<text transform="translate(3029,1064) rotate(90) scale(1,1.1)" font-size="24" fill="#000" font-family="'Liberation Mono', monospace" letter-spacing="-0.2">Notifications</text>
<path d="M3024 1310 Q3037 1296 3050 1310 Q3037 1324 3024 1310 Z" fill="#737373" />
<circle cx="3037" cy="1310" r="4.5" fill="#f2f2f2"/>
<circle cx="3037" cy="1310" r="2.5" fill="#737373"/>
<text transform="translate(3029,1330) rotate(90) scale(1,1.1)" font-size="24" fill="#000" font-family="'Liberation Mono', monospace" letter-spacing="-0.2">Previewer</text>
<rect x="3029" y="1515" width="14" height="21" fill="none" stroke="#97a0aa" stroke-width="2.4"/>
<g clip-path="url(#rstrip)">
<text transform="translate(3029,1551) rotate(90) scale(1,1.1)" font-size="24" fill="#000" font-family="'Liberation Mono', monospace" letter-spacing="-0.2">Device File Browser</text>
</g>
<rect x="36" y="1662" width="3024" height="2" fill="#d1d1d1" />
<path d="M105.5 1696 V1679 M105.5 1692 Q115.5 1690 115.5 1682" fill="none" stroke="#737373" stroke-width="3.2" />
<circle cx="105.5" cy="1696" r="3.4" fill="#737373"/><circle cx="105.5" cy="1679" r="3.2" fill="#737373"/><circle cx="115.5" cy="1682" r="3.2" fill="#737373"/>
<text transform="translate(133,1694) scale(1,1.1)" font-size="24" fill="#000" font-family="'Liberation Mono', monospace" >Git</text>
<path d="M226 1672 V1700 H251 M229 1694 L236 1684 L242 1690 L250 1678" fill="none" stroke="#737373" stroke-width="2.2" />
<text transform="translate(263,1694) scale(1,1.1)" font-size="24" fill="#000" font-family="'Liberation Mono', monospace" >Operation Analyzer</text>
<rect x="1032" y="1676" width="26" height="22" fill="#737373" />
<rect x="1036" y="1680.5" width="18" height="2.4" fill="#f2f2f2" />
<rect x="1036" y="1686" width="9" height="2.4" fill="#f2f2f2" />
<rect x="1036" y="1691.5" width="18" height="2.4" fill="#f2f2f2" />
<rect x="1036" y="1673.5" width="3" height="4" fill="#737373" />
<rect x="1051" y="1673.5" width="3" height="4" fill="#737373" />
<text transform="translate(1066,1694) scale(1,1.1)" font-size="24" fill="#000" font-family="'Liberation Mono', monospace" >Log</text>
<circle cx="1161" cy="1686" r="10.5" fill="#737373"/>
<rect x="1159.4" y="1679" width="3.2" height="8.5" fill="#f2f2f2" />
<rect x="1159.4" y="1690" width="3.2" height="3.2" fill="#f2f2f2" />
<text transform="translate(1182,1694) scale(1,1.1)" font-size="24" fill="#000" font-family="'Liberation Mono', monospace" >Problems</text>
<rect x="1342" y="1676" width="22" height="20" fill="#737373" />
<path d="M1345.5 1680 L1351 1684.5 L1345.5 1689" fill="none" stroke="#f2f2f2" stroke-width="2.2" />
<rect x="1352" y="1690" width="8" height="2.2" fill="#f2f2f2" />
<text transform="translate(1374,1694) scale(1,1.1)" font-size="24" fill="#000" font-family="'Liberation Mono', monospace" >Terminal</text>
<path d="M1538 1676 H1552 L1558 1687 L1552 1698 H1538 L1532 1687 Z" fill="#737373" />
<path d="M1541.5 1681 L1550.5 1687 L1541.5 1693 Z" fill="#f2f2f2" />
<text transform="translate(1565,1694) scale(1,1.1)" font-size="24" fill="#000" font-family="'Liberation Mono', monospace" >Services</text>
<path d="M1745 1690 L1752.5 1697.5" fill="none" stroke="#5a5a5a" stroke-width="3.6" />
<circle cx="1739.5" cy="1684.5" r="11.8" fill="#5a5a5a"/>
<path d="M1735 1680.5 L1731.5 1684.5 L1735 1688.5 M1744 1680.5 L1747.5 1684.5 L1744 1688.5 M1741.5 1678.5 L1737.5 1690.5" fill="none" stroke="#f2f2f2" stroke-width="1.9" />
<text transform="translate(1761,1694) scale(1,1.1)" font-size="24" fill="#000" font-family="'Liberation Mono', monospace" >Code Linter</text>
<rect x="1970" y="1675" width="24" height="8" fill="#737373" />
<rect x="1970" y="1685" width="7" height="12.5" fill="#737373" />
<rect x="1979" y="1685" width="15" height="5" fill="#737373" />
<rect x="1979" y="1692.5" width="15" height="5" fill="#737373" />
<text transform="translate(2003,1694) scale(1,1.1)" font-size="24" fill="#000" font-family="'Liberation Mono', monospace" >ArkUI Inspector</text>
<rect x="36" y="1708" width="3024" height="2" fill="#d1d1d1" />
<rect x="65.1" y="1718.9" width="18" height="17.8" fill="none" stroke="#737373" stroke-width="1.8"/>
<path d="M61.1 1722 V1741 H80" fill="none" stroke="#737373" stroke-width="1.8" />
<text transform="translate(121.5,1738) scale(1,1.1)" font-size="24" fill="#000" font-family="'Liberation Mono', monospace" >Deploy failed. Reason: error Status: 1 (15 minutes ago)</text>
<circle cx="2196" cy="1730" r="12" fill="#4e9f48"/>
<text transform="translate(2231,1738) scale(1,1.1)" font-size="24" fill="#000" font-family="'Liberation Mono', monospace" >61:6</text>
<text transform="translate(2314,1738) scale(1,1.1)" font-size="24" fill="#000" font-family="'Liberation Mono', monospace" >LF</text>
<text transform="translate(2365,1738) scale(1,1.1)" font-size="24" fill="#000" font-family="'Liberation Mono', monospace" >UTF-8</text>
<text transform="translate(2461,1738) scale(1,1.1)" font-size="24" fill="#000" font-family="'Liberation Mono', monospace" >2 spaces</text>
<text transform="translate(2601,1738) scale(1,1.1)" font-size="24" fill="#000" font-family="'Liberation Mono', monospace" >JSON: object-type</text>
<path d="M2878.2 1740.7 V1719.3 M2878.2 1733.5 Q2889.7 1730 2889.7 1721.6" fill="none" stroke="#737373" stroke-width="3" />
<circle cx="2878.2" cy="1740.7" r="3.4" fill="#737373"/><circle cx="2878.2" cy="1719.3" r="3.4" fill="#737373"/><circle cx="2889.7" cy="1721.6" r="3.4" fill="#737373"/>
<text transform="translate(2903,1738) scale(1,1.1)" font-size="24" fill="#000" font-family="'Liberation Mono', monospace" >master</text>
<path d="M3011.5 1728 V1724 A4.6 4.6 0 0 1 3020.7 1724 V1729" fill="none" stroke="#737373" stroke-width="2.8" />
<rect x="3016" y="1728.2" width="16" height="11.6" fill="#737373" />
<rect x="508.5" y="350.5" width="521" height="1385" fill="#f2f2f2" stroke="#d6d6d6" stroke-width="1.4"/>
<text transform="translate(574.5,395.5) scale(1,1.1)" font-size="28" fill="#000" font-family="'Liberation Mono', monospace" >New</text>
<path d="M995 379 L1003 387 L995 395" fill="none" stroke="#6e6e6e" stroke-width="2.4" />
<rect x="530" y="420" width="478" height="2" fill="#d6d6d6" />
<text transform="translate(574.5,463.5) scale(1,1.1)" font-size="28" fill="#000" font-family="'Liberation Mono', monospace" >Deploy 'Welcome.json'</text>
<path d="M542 461 H539 A7 7 0 0 1 540 448 A9 9 0 0 1 557 449 A6.5 6.5 0 0 1 556 461 H553" fill="none" stroke="#b9c0c7" stroke-width="2.2" />
<path d="M548 467 V453 M543 458 L548 453 L553 458" fill="none" stroke="#b9c0c7" stroke-width="2.2" />
<text transform="translate(574.5,513.5) scale(1,1.1)" font-size="28" fill="#000" font-family="'Liberation Mono', monospace" >Sync 'Welcome.json'</text>
<path d="M542 511 H539 A7 7 0 0 1 540 498 A9 9 0 0 1 557 499 A6.5 6.5 0 0 1 556 511 H553" fill="none" stroke="#b9c0c7" stroke-width="2.2" />
<path d="M548 502 V516 M543 511 L548 516 L553 511" fill="none" stroke="#b9c0c7" stroke-width="2.2" />
<text transform="translate(574.5,563.5) scale(1,1.1)" font-size="28" fill="#000" font-family="'Liberation Mono', monospace" >Generate Server Model</text>
<text transform="translate(574.5,613.5) scale(1,1.1)" font-size="28" fill="#000" font-family="'Liberation Mono', monospace" >Generate Client Model</text>
<rect x="510" y="630" width="518" height="50" fill="#3e71b7" />
<text transform="translate(574.5,663.5) scale(1,1.1)" font-size="28" fill="#fff" font-family="'Liberation Mono', monospace" >Generate Data Entry</text>
<rect x="530" y="688" width="478" height="2" fill="#d6d6d6" />
<text transform="translate(574.5,731.5) scale(1,1.1)" font-size="28" fill="#000" font-family="'Liberation Mono', monospace" >Cut</text>
<g fill="none" stroke="#808080" stroke-width="2.0"><path d="M979.475 715.3875 V727.1125 M985.4250000000001 715.3875 V727.1125 M976.5875000000001 718.275 H988.3125 M976.5875000000001 724.225 H988.3125"/><circle cx="977.0875000000001" cy="715.8875" r="2.8875"/><circle cx="987.8125" cy="715.8875" r="2.8875"/><circle cx="977.0875000000001" cy="726.6125" r="2.8875"/><circle cx="987.8125" cy="726.6125" r="2.8875"/></g>
<text transform="translate(991,731.0) scale(0.68,1)" font-size="29" font-family="'Liberation Sans', sans-serif" fill="#808080" stroke="#808080" stroke-width="0.9">X</text>
<circle cx="540.2" cy="713.8" r="4.2" fill="none" stroke="#6e6e6e" stroke-width="3.2"/>
<circle cx="540.2" cy="729.7" r="4.2" fill="none" stroke="#6e6e6e" stroke-width="3.2"/>
<path d="M544.5 717.5 L561.6 733.8" fill="none" stroke="#6e6e6e" stroke-width="3.6" />
<path d="M549.5 720.5 L561.6 709.5" fill="none" stroke="#6e6e6e" stroke-width="3.6" />
<path d="M544.5 726 L548.5 722.5" fill="none" stroke="#6e6e6e" stroke-width="3" />
<text transform="translate(574.5,781.5) scale(1,1.1)" font-size="28" fill="#000" font-family="'Liberation Mono', monospace" >Copy</text>
<g fill="none" stroke="#808080" stroke-width="2.0"><path d="M979.475 765.3875 V777.1125 M985.4250000000001 765.3875 V777.1125 M976.5875000000001 768.275 H988.3125 M976.5875000000001 774.225 H988.3125"/><circle cx="977.0875000000001" cy="765.8875" r="2.8875"/><circle cx="987.8125" cy="765.8875" r="2.8875"/><circle cx="977.0875000000001" cy="776.6125" r="2.8875"/><circle cx="987.8125" cy="776.6125" r="2.8875"/></g>
<text transform="translate(991,781.0) scale(0.68,1)" font-size="29" font-family="'Liberation Sans', sans-serif" fill="#808080" stroke="#808080" stroke-width="0.9">C</text>
<path d="M538 777.7 V759.8 H554" fill="none" stroke="#6e6e6e" stroke-width="3.6" />
<rect x="542" y="763.9" width="18" height="19.9" fill="#6e6e6e" />
<rect x="546" y="767.2" width="9.8" height="2.2" fill="#f2f2f2" />
<rect x="546" y="771.6" width="9.8" height="2.2" fill="#f2f2f2" />
<rect x="546" y="776.0" width="9.8" height="2.2" fill="#f2f2f2" />
<text transform="translate(574.5,831.5) scale(1,1.1)" font-size="28" fill="#000" font-family="'Liberation Mono', monospace" >Copy Path/Reference…</text>
<text transform="translate(574.5,881.5) scale(1,1.1)" font-size="28" fill="#000" font-family="'Liberation Mono', monospace" >Paste</text>
<g fill="none" stroke="#808080" stroke-width="2.0"><path d="M979.475 865.3875 V877.1125 M985.4250000000001 865.3875 V877.1125 M976.5875000000001 868.275 H988.3125 M976.5875000000001 874.225 H988.3125"/><circle cx="977.0875000000001" cy="865.8875" r="2.8875"/><circle cx="987.8125" cy="865.8875" r="2.8875"/><circle cx="977.0875000000001" cy="876.6125" r="2.8875"/><circle cx="987.8125" cy="876.6125" r="2.8875"/></g>
<text transform="translate(991,881.0) scale(0.68,1)" font-size="29" font-family="'Liberation Sans', sans-serif" fill="#808080" stroke="#808080" stroke-width="0.9">V</text>
<rect x="539.9" y="861.9" width="16.2" height="21.2" fill="none" stroke="#6e6e6e" stroke-width="3.8"/>
<rect x="544.2" y="858" width="7.8" height="4.4" fill="#6e6e6e" />
<rect x="546.2" y="859.2" width="3.6" height="1.6" fill="#f2f2f2" />
<text transform="translate(574.5,931.5) scale(1,1.1)" font-size="28" fill="#000" font-family="'Liberation Mono', monospace" >Find Usages</text>
<path d="M966.1 910.5 L973.1 919.62 H969.4 V930.5 H962.8000000000001 V919.62 H959.1 Z" fill="none" stroke="#808080" stroke-width="2.0" stroke-linejoin="round"/>
<g fill="none" stroke="#808080" stroke-width="2.0"><path d="M980.175 915.3875 V927.1125 M986.125 915.3875 V927.1125 M977.2875 918.275 H989.0124999999999 M977.2875 924.225 H989.0124999999999"/><circle cx="977.7875" cy="915.8875" r="2.8875"/><circle cx="988.5124999999999" cy="915.8875" r="2.8875"/><circle cx="977.7875" cy="926.6125" r="2.8875"/><circle cx="988.5124999999999" cy="926.6125" r="2.8875"/></g>
<text transform="translate(992,931.0) scale(0.68,1)" font-size="29" font-family="'Liberation Sans', sans-serif" fill="#808080" stroke="#808080" stroke-width="0.9">G</text>
<rect x="530" y="956" width="478" height="2" fill="#d6d6d6" />
<text transform="translate(574.5,999.5) scale(1,1.1)" font-size="28" fill="#000" font-family="'Liberation Mono', monospace" >Inspect Code...</text>
<rect x="530" y="1024" width="478" height="2" fill="#d6d6d6" />
<text transform="translate(574.5,1067.5) scale(1,1.1)" font-size="28" fill="#000" font-family="'Liberation Mono', monospace" >Refactor</text>
<path d="M995 1051 L1003 1059 L995 1067" fill="none" stroke="#6e6e6e" stroke-width="2.4" />
<rect x="530" y="1092" width="478" height="2" fill="#d6d6d6" />
<text transform="translate(574.5,1135.5) scale(1,1.1)" font-size="28" fill="#000" font-family="'Liberation Mono', monospace" >Bookmarks</text>
<path d="M995 1119 L1003 1127 L995 1135" fill="none" stroke="#6e6e6e" stroke-width="2.4" />
<rect x="530" y="1160" width="478" height="2" fill="#d6d6d6" />
<text transform="translate(574.5,1203.5) scale(1,1.1)" font-size="28" fill="#000" font-family="'Liberation Mono', monospace" >Reformat Code</text>
<path d="M966.1 1182.5 L973.1 1191.62 H969.4 V1202.5 H962.8000000000001 V1191.62 H959.1 Z" fill="none" stroke="#808080" stroke-width="2.0" stroke-linejoin="round"/>
<g fill="none" stroke="#808080" stroke-width="2.0"><path d="M980.175 1187.3875 V1199.1125 M986.125 1187.3875 V1199.1125 M977.2875 1190.275 H989.0124999999999 M977.2875 1196.225 H989.0124999999999"/><circle cx="977.7875" cy="1187.8875" r="2.8875"/><circle cx="988.5124999999999" cy="1187.8875" r="2.8875"/><circle cx="977.7875" cy="1198.6125" r="2.8875"/><circle cx="988.5124999999999" cy="1198.6125" r="2.8875"/></g>
<text transform="translate(992,1203.0) scale(0.68,1)" font-size="29" font-family="'Liberation Sans', sans-serif" fill="#808080" stroke="#808080" stroke-width="0.9">F</text>
<rect x="540" y="1183" width="22" height="3" fill="#6e6e6e" />
<rect x="548" y="1190" width="14" height="3" fill="#6e6e6e" />
<rect x="548" y="1197" width="14" height="3" fill="#6e6e6e" />
<rect x="540" y="1204" width="22" height="3" fill="#6e6e6e" />
<path d="M537 1189 L543 1194 L537 1199 Z" fill="#4d9ad8" />
<text transform="translate(574.5,1253.5) scale(1,1.1)" font-size="28" fill="#000" font-family="'Liberation Mono', monospace" >Delete…</text>
<path d="M993 1236 H1005 L1013.5 1244.5 L1005 1253 H993 Q990 1253 990 1250 V1239 Q990 1236 993 1236 Z" fill="#7a7a7a" />
<path d="M995 1240 L1003 1248.5 M1003 1240 L995 1248.5" fill="none" stroke="#f2f2f2" stroke-width="2.2" />
<text transform="translate(574.5,1303.5) scale(1,1.1)" font-size="28" fill="#000" font-family="'Liberation Mono', monospace" >Override File Type</text>
<rect x="530" y="1328" width="478" height="2" fill="#d6d6d6" />
<text transform="translate(574.5,1371.5) scale(1,1.1)" font-size="28" fill="#000" font-family="'Liberation Mono', monospace" >Open in Right Split</text>
<path d="M982.3 1350.0 L989.3 1359.12 H985.5999999999999 V1370.0 H979.0 V1359.12 H975.3 Z" fill="none" stroke="#808080" stroke-width="2.0" stroke-linejoin="round"/>
<path d="M1007 1350.5 V1362.5 H998 V1368.5 L991 1360.5 L998 1352.5 V1357.5 H1002 V1350.5 Z" fill="none" stroke="#808080" stroke-width="2.0" stroke-linejoin="round"/>
<rect x="538" y="1353" width="22" height="22" fill="none" stroke="#6e6e6e" stroke-width="2.2"/>
<rect x="548" y="1353" width="2" height="22" fill="#6e6e6e" />
<text transform="translate(574.5,1421.5) scale(1,1.1)" font-size="28" fill="#000" font-family="'Liberation Mono', monospace" >Open In</text>
<path d="M995 1405 L1003 1413 L995 1421" fill="none" stroke="#6e6e6e" stroke-width="2.4" />
<rect x="530" y="1446" width="478" height="2" fill="#d6d6d6" />
<text transform="translate(574.5,1489.5) scale(1,1.1)" font-size="28" fill="#000" font-family="'Liberation Mono', monospace" >Local History</text>
<path d="M995 1473 L1003 1481 L995 1489" fill="none" stroke="#6e6e6e" stroke-width="2.4" />
<text transform="translate(574.5,1539.5) scale(1,1.1)" font-size="28" fill="#000" font-family="'Liberation Mono', monospace" >Git</text>
<path d="M995 1523 L1003 1531 L995 1539" fill="none" stroke="#6e6e6e" stroke-width="2.4" />
<text transform="translate(574.5,1589.5) scale(1,1.1)" font-size="28" fill="#000" font-family="'Liberation Mono', monospace" >Repair IDE on File</text>
<text transform="translate(574.5,1639.5) scale(1,1.1)" font-size="28" fill="#000" font-family="'Liberation Mono', monospace" >Reload from Disk</text>
<path d="M539 1625 A10.5 10.5 0 0 1 558.5 1629" fill="none" stroke="#6e6e6e" stroke-width="4" />
<path d="M557 1635 A10.5 10.5 0 0 1 537.5 1632" fill="none" stroke="#6e6e6e" stroke-width="4" />
<path d="M536 1618.5 V1628.5 H545.7 Z" fill="#6e6e6e" />
<path d="M560 1631.3 V1641 H551 Z" fill="#6e6e6e" />
<rect x="530" y="1664" width="478" height="2" fill="#d6d6d6" />
<text transform="translate(574.5,1707.5) scale(1,1.1)" font-size="28" fill="#000" font-family="'Liberation Mono', monospace" >Compare With...</text>
<g fill="none" stroke="#808080" stroke-width="2.0"><path d="M979.475 1691.3875 V1703.1125 M985.4250000000001 1691.3875 V1703.1125 M976.5875000000001 1694.275 H988.3125 M976.5875000000001 1700.225 H988.3125"/><circle cx="977.0875000000001" cy="1691.8875" r="2.8875"/><circle cx="987.8125" cy="1691.8875" r="2.8875"/><circle cx="977.0875000000001" cy="1702.6125" r="2.8875"/><circle cx="987.8125" cy="1702.6125" r="2.8875"/></g>
<text transform="translate(991,1707.0) scale(0.68,1)" font-size="29" font-family="'Liberation Sans', sans-serif" fill="#808080" stroke="#808080" stroke-width="0.9">D</text>
<path d="M546 1691.4 L553.8 1683.7 V1700 Z" fill="#559bd6" />
<rect x="553.8" y="1690" width="8.2" height="3.8" fill="#559bd6" />
<path d="M550.2 1704 L542.3 1695.8 V1712 Z" fill="#559bd6" />
<rect x="534" y="1702" width="8.3" height="3.9" fill="#559bd6" />
</g></svg></body></html>
